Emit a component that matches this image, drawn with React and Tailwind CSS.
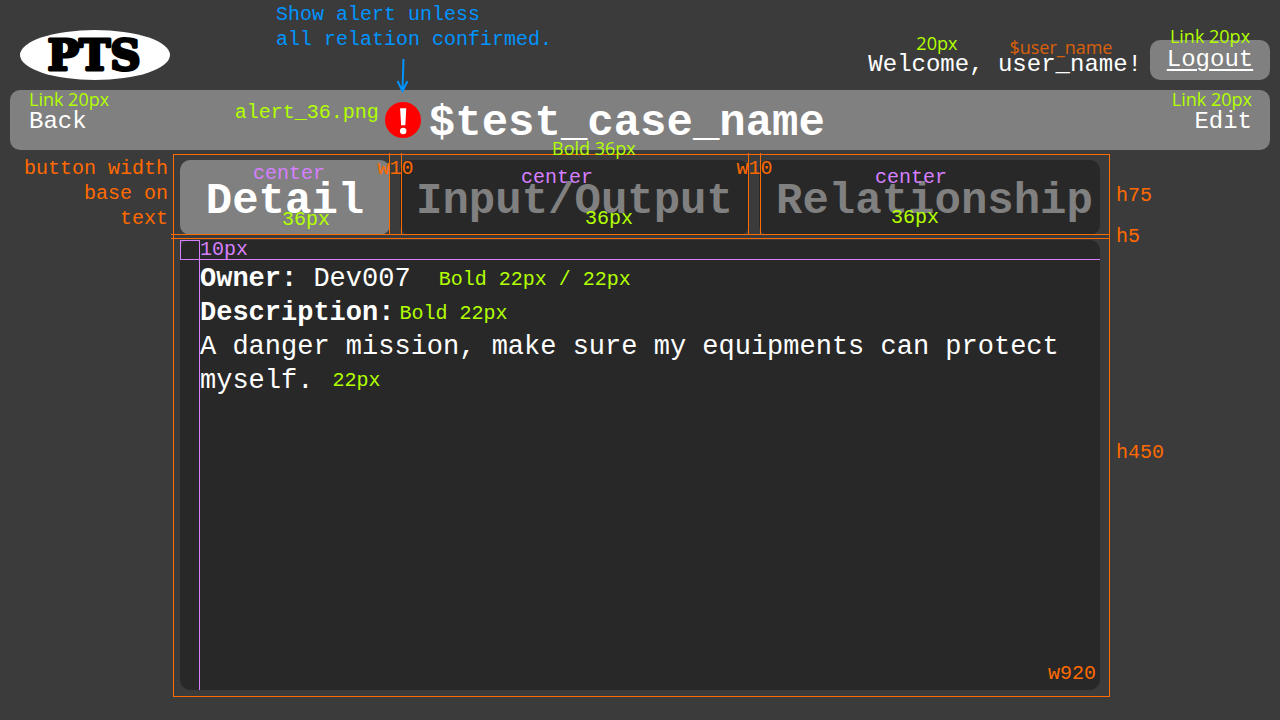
import React from "react";

const tones = {
  lime: "text-[#b2ff00]",
  orange: "text-[#ff6a00]",
  violet: "text-[#d67fff]",
  blue: "text-[#0094ff]",
};

/* Spec annotation written beside or over the element it describes. */
function Note({ tone, sans = false, className = "", children }) {
  const font = sans
    ? "font-['Open_Sans',sans-serif] text-[18px]"
    : "font-['Liberation_Mono',monospace] text-[20px]";
  return (
    <span className={`pointer-events-none z-20 whitespace-nowrap ${font} ${tones[tone]} ${className}`}>
      {children}
    </span>
  );
}

function Guide({ className }) {
  return <span className={`pointer-events-none absolute z-10 bg-[#ff6a00] ${className}`} />;
}

function Logo() {
  return (
    <svg className="h-[50px] w-[150px] shrink-0 self-end" viewBox="0 0 150 50" role="img" aria-label="PTS">
      <ellipse cx="75" cy="25" rx="75" ry="25" fill="#fff" />
      <text
        x="74"
        y="40"
        textAnchor="middle"
        fontFamily="DejaVu Serif, serif"
        fontWeight="700"
        fontSize="42"
        fill="#000"
        stroke="#000"
        strokeWidth="3"
        strokeLinejoin="round"
      >
        PTS
      </text>
    </svg>
  );
}

function Header() {
  return (
    <header className="flex h-[80px] items-end pl-[10px]">
      <Logo />
      <Note tone="blue" className="ml-[106px] self-start pt-[2px] leading-[25px]">
        Show alert unless
        <br />
        all relation confirmed.
      </Note>
      <div className="ml-auto flex items-end gap-[8px]">
        <div className="flex flex-col pb-[3px]">
          <div className="flex h-[20px] gap-[52px] pl-[48px] leading-[20px]">
            <Note tone="lime" sans>20px</Note>
            <Note tone="orange" sans className="pt-[4px] opacity-80">$user_name</Note>
          </div>
          <p className="whitespace-nowrap text-[24px] leading-[24px] text-white">
            Welcome, user_name!
          </p>
        </div>
        <div className="relative">
          <a
            href="#logout"
            className="flex h-[40px] w-[120px] items-center justify-center rounded-[10px] bg-[#808080] text-[24px] text-white underline decoration-2 underline-offset-[3px]"
          >
            Logout
          </a>
          <Note tone="lime" sans className="absolute inset-x-0 bottom-full -mb-[9px] text-center leading-[25px]">
            Link 20px
          </Note>
        </div>
      </div>
    </header>
  );
}

function TitleBar() {
  return (
    <div className="mt-[10px] grid h-[60px] grid-cols-[5fr_auto_6fr] rounded-[10px] bg-[#808080] pl-[19px] pr-[18px] text-white">
      <div className="flex justify-between pr-[6px]">
        <div className="flex flex-col">
          <Note tone="lime" sans className="leading-[18px]">Link 20px</Note>
          <a href="#back" className="text-[24px] leading-[28px]">Back</a>
        </div>
        <Note tone="lime" className="pt-[10px] leading-[25px]">alert_36.png</Note>
      </div>
      <div className="relative flex items-center gap-[8px]">
        <svg className="size-[36px]" viewBox="0 0 36 36" role="img" aria-label="Alert">
          <circle cx="18" cy="18" r="18" fill="#ff0000" />
          <path d="M15.1 6.2h6.2l-1 17h-4.2z" fill="#fff" />
          <circle cx="18.2" cy="29" r="3.2" fill="#fff" />
        </svg>
        <h1 className="whitespace-nowrap pt-[6px] text-[44px] font-bold leading-[50px]">
          $test_case_name
        </h1>
        <svg
          className="absolute bottom-full left-[10px] -mb-[4px] h-[36px] w-[16px]"
          viewBox="0 0 16 36"
          fill="none"
          stroke="#0094ff"
          strokeWidth="2"
          aria-hidden="true"
        >
          <path d="M8.5 1 7.5 32M2.5 23l5 10 5-10" />
        </svg>
        <Note tone="lime" sans className="absolute inset-x-0 top-full -mt-[14px] pr-[22px] text-center leading-[25px]">
          Bold 36px
        </Note>
      </div>
      <div className="flex flex-col items-end">
        <Note tone="lime" sans className="leading-[18px]">Link 20px</Note>
        <a href="#edit" className="text-[24px] leading-[28px]">Edit</a>
      </div>
    </div>
  );
}

function Tab({ active = false, className, textClass = "", notesClass, sizeClass, label, children }) {
  return (
    <div className={`relative ${className}`}>
      <button
        type="button"
        aria-pressed={active}
        className={`h-[75px] w-full whitespace-nowrap rounded-[10px] pt-[6px] text-[44px] font-bold leading-[50px] ${textClass} ${
          active ? "bg-[#808080] text-white" : "bg-[#282828] text-[#808080]"
        }`}
      >
        {label}
      </button>
      <div
        className={`pointer-events-none absolute inset-0 z-20 flex flex-col justify-between leading-[25px] ${notesClass}`}
      >
        <Note tone="violet">center</Note>
        <Note tone="lime" className={sizeClass}>36px</Note>
      </div>
      {children}
    </div>
  );
}

/* Measures the space between two neighbouring tabs. */
function GapMark() {
  return (
    <div className="pointer-events-none absolute -top-[7px] bottom-0 left-full z-20 -ml-px flex w-[13px] justify-center border-x border-[#ff6a00]">
      <Note tone="orange" className="pt-[3px] leading-[25px]">w10</Note>
    </div>
  );
}

function Tabs() {
  return (
    <nav className="flex gap-[10px]">
      <Tab active label="Detail" className="w-[210px]" notesClass="pb-[3px] pl-[73px] pt-[1px]" sizeClass="pl-[29px]">
        <GapMark />
      </Tab>
      <Tab label="Input/Output" className="w-[349px]" notesClass="pb-[4px] pl-[121px] pt-[5px]" sizeClass="pl-[64px]">
        <GapMark />
      </Tab>
      <Tab
        label="Relationship"
        className="flex-1"
        textClass="pl-[10px]"
        notesClass="pb-[5px] pl-[116px] pt-[5px]"
        sizeClass="pl-[16px]"
      />
    </nav>
  );
}

function DetailPanel() {
  return (
    <section className="relative mt-[5px] flex min-h-[450px] flex-col rounded-[10px] bg-[#282828] px-[20px] text-[27px] leading-[34px] text-white">
      <Note tone="violet" className="leading-[20px]">10px</Note>
      <p className="mt-[2px] flex items-center gap-[28px]">
        <span>
          <b>Owner:</b> Dev007
        </span>
        <Note tone="lime" className="leading-[25px]">Bold 22px / 22px</Note>
      </p>
      <p className="flex items-center gap-[5px]">
        <b>Description:</b>
        <Note tone="lime" className="leading-[25px]">Bold 22px</Note>
      </p>
      <p>
        A danger mission, make sure my equipments can protect myself.
        <Note tone="lime" className="ml-[19px] align-[2px] leading-[25px]">22px</Note>
      </p>
      <Note tone="orange" className="-mr-[16px] mt-auto self-end pb-[4px] leading-[25px]">w920</Note>

      <span className="absolute left-0 top-0 size-[20px] border border-[#d67fff]" />
      <span className="absolute inset-x-0 top-[19px] h-px bg-[#d67fff]" />
      <span className="absolute inset-y-0 left-[19px] w-px bg-[#d67fff]" />
    </section>
  );
}

export default function App() {
  return (
    <div className="min-h-screen overflow-x-hidden bg-[#3b3b3b] px-[10px] pb-[30px] font-['Liberation_Mono',monospace]">
      <Header />
      <TitleBar />
      <main className="mt-[6px] grid grid-cols-[1fr_minmax(0,920px)_1fr]">
        <Note tone="orange" className="pr-[12px] text-right leading-[25px]">
          button width
          <br />
          base on
          <br />
          text
        </Note>
        <div className="relative pt-[4px]">
          <Tabs />
          <DetailPanel />
          <span className="pointer-events-none absolute -bottom-[7px] -left-[7px] -right-[10px] -top-[2px] border border-[#ff6a00]" />
          <Guide className="-left-[9px] -right-[10px] top-[78px] h-px" />
          <Guide className="-left-[9px] -right-[10px] top-[82px] h-px" />
        </div>
        <div className="flex flex-col pl-[16px] pt-[2px]">
          <Note tone="orange" className="flex h-[76px] items-center">h75</Note>
          <Note tone="orange" className="flex h-[5px] items-center">h5</Note>
          <Note tone="orange" className="flex flex-1 items-center pb-[24px]">h450</Note>
        </div>
      </main>
    </div>
  );
}
